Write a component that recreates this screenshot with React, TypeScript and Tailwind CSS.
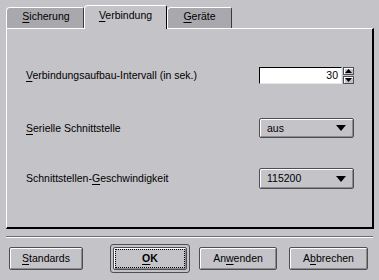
import React from "react";

const Mn = ({ children }: { children: React.ReactNode }) => (
  <span className="underline underline-offset-[2px] decoration-1">{children}</span>
);

const Tab = ({ active, w, children }: { active?: boolean; w: string; children: React.ReactNode }) => (
  <div
    className={
      active
        ? `relative z-10 -mb-px flex h-[24px] items-start pt-[4px] justify-center rounded-tl-[4px] rounded-tr-[2px] border-l border-t border-white border-r border-r-black bg-[#c4c3c8] ${w}`
        : `flex h-[21px] items-start pt-[3px] justify-center rounded-tl-[4px] rounded-tr-[2px] border-l border-t border-white border-r border-r-[#3a393d] bg-[#a9a8ad] ${w}`
    }
  >
    {children}
  </div>
);

const Button = ({ w, children }: { w: string; children: React.ReactNode }) => (
  <div
    className={`flex h-[23px] items-center justify-center rounded-[2px] border border-[#4e4d52] shadow-[inset_1px_1px_0_#ffffff,inset_-1px_-1px_0_#8b8a8f] ${w}`}
  >
    {children}
  </div>
);

const Arrow = () => (
  <svg width="10" height="6" viewBox="0 0 10 6" className="block">
    <polygon points="0,0 10,0 5,6" fill="#000" />
  </svg>
);

const Combo = ({ value, h }: { value: string; h: string }) => (
  <div
    className={`flex w-[95px] items-center justify-between rounded-[2px] border border-[#4e4d52] pl-[7px] pr-[7px] shadow-[inset_1px_1px_0_#ffffff,inset_-1px_-1px_0_#8b8a8f] ${h}`}
  >
    <span>{value}</span>
    <Arrow />
  </div>
);

const Spin = () => (
  <div className="flex h-[17px] w-[95px] items-stretch">
    <div className="flex flex-1 items-center justify-end border-l border-t border-[#000] border-b border-b-[#e8e8ea] border-r border-r-[#e8e8ea] bg-white pr-[3px]">
      30
    </div>
    <div className="ml-px flex w-[11px] flex-col gap-[1px]">
      <div className="flex flex-1 items-center justify-center border border-[#4e4d52] shadow-[inset_1px_1px_0_#ffffff]">
        <svg width="7" height="4" viewBox="0 0 7 4" className="block">
          <polygon points="0,4 7,4 3.5,0" fill="#000" />
        </svg>
      </div>
      <div className="flex flex-1 items-center justify-center border border-[#4e4d52] shadow-[inset_1px_1px_0_#ffffff]">
        <svg width="7" height="4" viewBox="0 0 7 4" className="block">
          <polygon points="0,0 7,0 3.5,4" fill="#000" />
        </svg>
      </div>
    </div>
  </div>
);

export default function App() {
  return (
    <div
      className="flex h-[280px] w-[379px] flex-col bg-[#c4c3c8] pt-[5px] text-[10.5px] leading-none text-black"
      style={{ fontFamily: '"Liberation Sans", Arial, sans-serif' }}
    >
      {/* tabs */}
      <div className="flex h-[23px] items-end pl-[6px]">
        <Tab w="w-[78px]">
          <span className="pl-[2px]">
            <Mn>S</Mn>icherung
          </span>
        </Tab>
        <Tab active w="w-[83px]">
          <span>
            <Mn>V</Mn>erbindung
          </span>
        </Tab>
        <Tab w="w-[65px]">
          <span>
            <Mn>G</Mn>eräte
          </span>
        </Tab>
      </div>

      {/* panel */}
      <div className="mx-[6px] mr-[5px] flex h-[201px] flex-col border-l border-t border-white border-r-2 border-b-2 border-r-black border-b-black pl-[19px] pr-[18px]">
        <div className="mt-[38px] flex items-center justify-between">
          <span>
            <Mn>V</Mn>erbindungsaufbau-Intervall (in sek.)
          </span>
          <Spin />
        </div>
        <div className="mt-[34px] flex items-center justify-between">
          <span>
            <Mn>S</Mn>erielle Schnittstelle
          </span>
          <Combo value="aus" h="h-[20px]" />
        </div>
        <div className="mt-[30px] flex items-center justify-between">
          <span>
            Schnittstellen-<Mn>G</Mn>eschwindigkeit
          </span>
          <Combo value="115200" h="h-[21px]" />
        </div>
      </div>

      {/* separator */}
      <div className="mx-[6px] mt-[7px] h-[2px] border-t border-[#6d6c71] border-b border-b-white" />

      {/* buttons */}
      <div className="mt-[6px] flex items-center pl-[9px]">
        <Button w="w-[74px]">
          <span>
            <Mn>S</Mn>tandards
          </span>
        </Button>
        <div className="ml-[27px] rounded-[3px] border border-[#4e4d52] p-[2px]">
          <Button w="w-[74px]">
            <span className="border border-dotted border-black px-[26px] py-[3px] font-bold">
              <Mn>O</Mn>K
            </span>
          </Button>
        </div>
        <div className="ml-[9px]">
          <Button w="w-[78px]">
            <span>
              An<Mn>w</Mn>enden
            </span>
          </Button>
        </div>
        <div className="ml-[12px]">
          <Button w="w-[79px]">
            <span>
              A<Mn>b</Mn>brechen
            </span>
          </Button>
        </div>
      </div>
    </div>
  );
}
